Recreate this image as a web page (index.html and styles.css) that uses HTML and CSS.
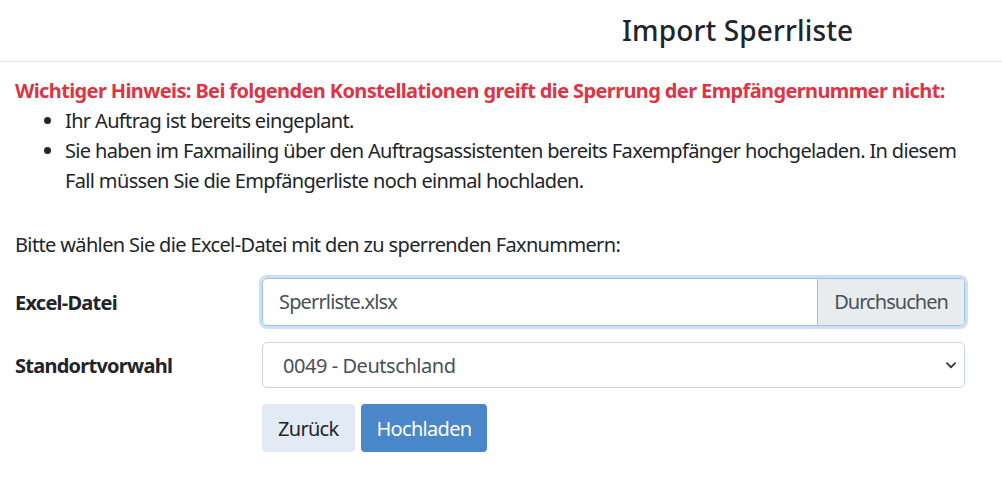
FILE: index.html
```html
<!DOCTYPE html>
<html lang="de">
<head>
<meta charset="utf-8">
<title>Import Sperrliste</title>
<link rel="stylesheet" href="styles.css">
</head>
<body>
<header class="page-header">
  <h1 class="title">Import Sperrliste</h1>
</header>
<main class="content">
  <p class="warning">Wichtiger Hinweis: Bei folgenden Konstellationen greift die Sperrung der Empfängernummer nicht:</p>
  <ul class="notes">
    <li>Ihr Auftrag ist bereits eingeplant.</li>
    <li>Sie haben im Faxmailing über den Auftragsassistenten bereits Faxempfänger hochgeladen. In diesem Fall müssen Sie die Empfängerliste noch einmal hochladen.</li>
  </ul>
  <p class="intro">Bitte wählen Sie die Excel-Datei mit den zu sperrenden Faxnummern:</p>
  <form class="form">
    <label class="label">Excel-Datei</label>
    <div class="file-group">
      <span class="file-name">Sperrliste.xlsx</span>
      <span class="file-btn">Durchsuchen</span>
    </div>
    <label class="label">Standortvorwahl</label>
    <div class="select-wrap">
      <select class="select">
        <option>0049 - Deutschland</option>
      </select>
      <svg class="chevron" viewBox="0 0 16 16" width="12" height="12"><path d="M2.5 5.5 L8 11 L13.5 5.5" fill="none" stroke="#343a40" stroke-width="2.4" stroke-linecap="round" stroke-linejoin="round"/></svg>
    </div>
    <span></span>
    <div class="actions">
      <button type="button" class="btn btn-light">Zurück</button>
      <button type="button" class="btn btn-primary">Hochladen</button>
    </div>
  </form>
</main>
</body>
</html>
```
FILE: styles.css
```css
* { box-sizing: border-box; }
html, body { margin: 0; padding: 0; background: #fff; }
body {
  font-family: "Noto Sans", "Open Sans", sans-serif;
  font-size: 20px;
  line-height: 1.5;
  color: #212529;
}
.page-header {
  height: 62px;
  border-bottom: 1px solid #dee2e6;
  padding-left: 622px;
}
.title {
  margin: 0;
  padding-top: 10px;
  font-size: 28px;
  font-weight: 500;
  line-height: 40px;
  letter-spacing: 0.15px;
}
.content {
  padding: 14px 37px 0 15px;
}
.warning {
  margin: 0;
  color: #dc3545;
  font-weight: 700;
  letter-spacing: -0.62px;
}
.notes {
  margin: 0 0 34px 0;
  padding-left: 50px;
  letter-spacing: -0.65px;
}
.notes li { padding-left: 0; }
.intro {
  margin: 0 0 18px 0;
  letter-spacing: -0.64px;
}
.form {
  display: grid;
  grid-template-columns: 247px 1fr;
  row-gap: 16px;
  align-items: center;
}
.label {
  font-weight: 700;
  letter-spacing: -0.75px;
  padding-top: 2px;
}
.file-group {
  display: flex;
  height: 48px;
  border: 1px solid #9ec2e6;
  border-radius: 5px;
  box-shadow: 0 0 0 3px #cfe0f2;
  overflow: hidden;
}
.file-name {
  flex: 1;
  padding: 0 16px;
  display: flex;
  align-items: center;
  color: #495057;
  letter-spacing: -0.85px;
}
.file-btn {
  display: flex;
  align-items: center;
  padding: 0 16px;
  background: #e9ecef;
  border-left: 1px solid #9ec2e6;
  color: #495057;
  letter-spacing: -0.95px;
}
.select-wrap {
  position: relative;
  height: 46px;
}
.select {
  -webkit-appearance: none;
  appearance: none;
  width: 100%;
  height: 46px;
  border: 1px solid #ced4da;
  border-radius: 5px;
  background: #fff;
  padding: 0 40px 0 20px;
  font-family: inherit;
  font-size: 20px;
  color: #495057;
  letter-spacing: -0.45px;
}
.chevron {
  position: absolute;
  right: 8px;
  top: 17px;
  pointer-events: none;
}
.actions {
  display: flex;
  gap: 6px;
}
.btn {
  height: 48px;
  border: none;
  border-radius: 4px;
  padding: 0 16px;
  font-family: inherit;
  font-size: 20px;
  letter-spacing: -0.7px;
}
.btn-light {
  background: #e2ebf5;
  color: #212529;
}
.btn-primary {
  background: #4a87c8;
  color: #fff;
}
```
